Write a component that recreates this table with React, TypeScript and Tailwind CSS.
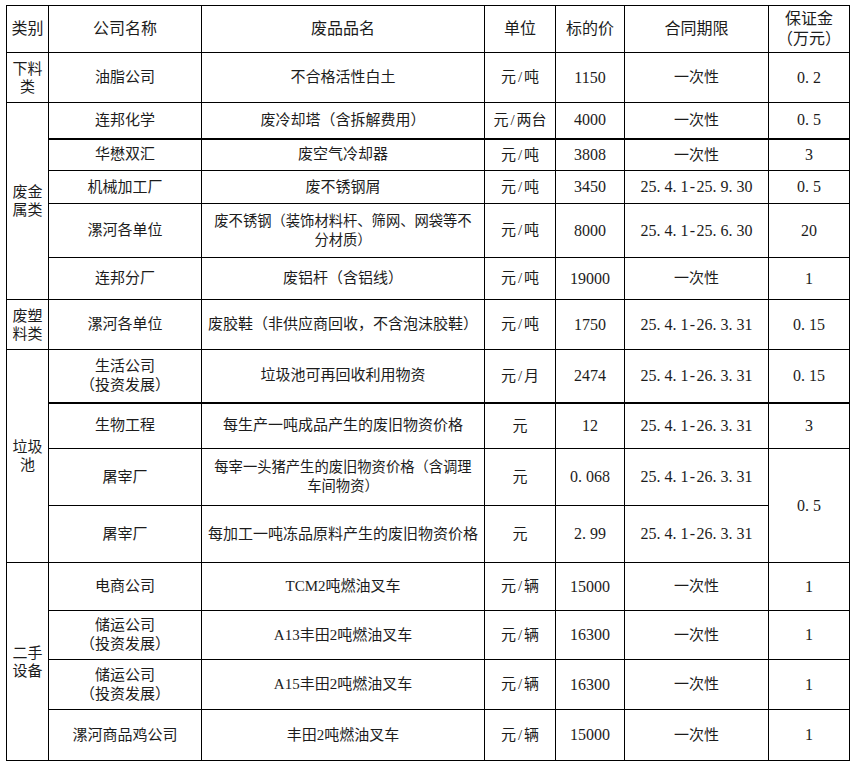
import React from "react";

// numbers / units: SimSun-like half-width cells for . - /
function Mono({ text }: { text: string }) {
  return (
    <>
      {text.split("").map((c, i) =>
        c === "." || c === "-" || c === "/" ? (
          <span
            key={i}
            className={
              "inline-block w-[8px] " + (c === "." ? "text-left" : "text-center")
            }
          >
            {c}
          </span>
        ) : (
          <React.Fragment key={i}>{c}</React.Fragment>
        )
      )}
    </>
  );
}

const cell = "border border-black p-0 text-center align-middle";
const num = "font-['Liberation_Serif'] text-[16px]";

type Row = {
  h: string;
  cat?: { label: React.ReactNode; span: number };
  company: React.ReactNode;
  item: React.ReactNode;
  itemSmall?: boolean;
  unit: string;
  price: string;
  term: string;
  deposit?: { v: string; span: number };
  thick?: boolean;
};

const rows: Row[] = [
  {
    h: "h-[50px]",
    cat: { label: <>下料<br />类</>, span: 1 },
    company: "油脂公司",
    item: "不合格活性白土",
    unit: "元/吨",
    price: "1150",
    term: "一次性",
    deposit: { v: "0.2", span: 1 },
  },
  {
    h: "h-[36px]",
    cat: { label: <>废金<br />属类</>, span: 5 },
    company: "连邦化学",
    item: "废冷却塔（含拆解费用）",
    unit: "元/两台",
    price: "4000",
    term: "一次性",
    deposit: { v: "0.5", span: 1 },
    thick: true,
  },
  {
    h: "h-[32px]",
    company: "华懋双汇",
    item: "废空气冷却器",
    unit: "元/吨",
    price: "3808",
    term: "一次性",
    deposit: { v: "3", span: 1 },
  },
  {
    h: "h-[33px]",
    company: "机械加工厂",
    item: "废不锈钢屑",
    unit: "元/吨",
    price: "3450",
    term: "25.4.1-25.9.30",
    deposit: { v: "0.5", span: 1 },
  },
  {
    h: "h-[54px]",
    company: "漯河各单位",
    item: <>废不锈钢（装饰材料杆、筛网、网袋等不<br />分材质）</>,
    itemSmall: true,
    unit: "元/吨",
    price: "8000",
    term: "25.4.1-25.6.30",
    deposit: { v: "20", span: 1 },
  },
  {
    h: "h-[42px]",
    company: "连邦分厂",
    item: "废铝杆（含铝线）",
    unit: "元/吨",
    price: "19000",
    term: "一次性",
    deposit: { v: "1", span: 1 },
  },
  {
    h: "h-[50px]",
    cat: { label: <>废塑<br />料类</>, span: 1 },
    company: "漯河各单位",
    item: "废胶鞋（非供应商回收，不含泡沫胶鞋）",
    unit: "元/吨",
    price: "1750",
    term: "25.4.1-26.3.31",
    deposit: { v: "0.15", span: 1 },
  },
  {
    h: "h-[53px]",
    cat: { label: <>垃圾<br />池</>, span: 4 },
    company: <>生活公司<br />（投资发展）</>,
    item: "垃圾池可再回收利用物资",
    unit: "元/月",
    price: "2474",
    term: "25.4.1-26.3.31",
    deposit: { v: "0.15", span: 1 },
    thick: true,
  },
  {
    h: "h-[46px]",
    company: "生物工程",
    item: "每生产一吨成品产生的废旧物资价格",
    unit: "元",
    price: "12",
    term: "25.4.1-26.3.31",
    deposit: { v: "3", span: 1 },
  },
  {
    h: "h-[57px]",
    company: "屠宰厂",
    item: <>每宰一头猪产生的废旧物资价格（含调理<br />车间物资）</>,
    itemSmall: true,
    unit: "元",
    price: "0.068",
    term: "25.4.1-26.3.31",
    deposit: { v: "0.5", span: 2 },
  },
  {
    h: "h-[57px]",
    company: "屠宰厂",
    item: "每加工一吨冻品原料产生的废旧物资价格",
    unit: "元",
    price: "2.99",
    term: "25.4.1-26.3.31",
  },
  {
    h: "h-[48px]",
    cat: { label: <>二手<br />设备</>, span: 4 },
    company: "电商公司",
    item: "TCM2吨燃油叉车",
    unit: "元/辆",
    price: "15000",
    term: "一次性",
    deposit: { v: "1", span: 1 },
  },
  {
    h: "h-[49px]",
    company: <>储运公司<br />（投资发展）</>,
    item: "A13丰田2吨燃油叉车",
    unit: "元/辆",
    price: "16300",
    term: "一次性",
    deposit: { v: "1", span: 1 },
  },
  {
    h: "h-[50px]",
    company: <>储运公司<br />（投资发展）</>,
    item: "A15丰田2吨燃油叉车",
    unit: "元/辆",
    price: "16300",
    term: "一次性",
    deposit: { v: "1", span: 1 },
  },
  {
    h: "h-[51px]",
    company: "漯河商品鸡公司",
    item: "丰田2吨燃油叉车",
    unit: "元/辆",
    price: "15000",
    term: "一次性",
    deposit: { v: "1", span: 1 },
  },
];

export default function App() {
  return (
    <div className="min-h-screen bg-white pl-[6px] pt-[5px] font-['Liberation_Serif','Noto_Sans_CJK_SC',serif] text-[15px] text-[#1c1c1c]">
      <table className="table-fixed border-collapse w-[843px]">
        <colgroup>
          <col className="w-[42px]" />
          <col className="w-[153px]" />
          <col className="w-[283px]" />
          <col className="w-[71px]" />
          <col className="w-[69px]" />
          <col className="w-[144px]" />
          <col className="w-[81px]" />
        </colgroup>
        <thead>
          <tr className="h-[47px] text-[16px]">
            <th className={cell + " font-normal"}>类别</th>
            <th className={cell + " font-normal"}>公司名称</th>
            <th className={cell + " font-normal"}>废品品名</th>
            <th className={cell + " font-normal"}>单位</th>
            <th className={cell + " font-normal"}>标的价</th>
            <th className={cell + " font-normal"}>合同期限</th>
            <th className={cell + " font-normal leading-[20px]"}>
              保证金
              <br />
              （万元）
            </th>
          </tr>
        </thead>
        <tbody>
          {rows.map((r, i) => {
            const b = r.thick ? " border-b-2" : "";
            return (
              <tr key={i} className={r.h}>
                {r.cat && (
                  <td rowSpan={r.cat.span} className={cell + " leading-[18px]"}>
                    {r.cat.label}
                  </td>
                )}
                <td className={cell + b + " leading-[19px]"}>{r.company}</td>
                <td
                  className={
                    cell +
                    b +
                    " whitespace-nowrap leading-[19px]" +
                    (r.itemSmall ? " text-[14.3px]" : "")
                  }
                >
                  {r.item}
                </td>
                <td className={cell + b}>
                  <Mono text={r.unit} />
                </td>
                <td className={cell + b + " " + num}>
                  <Mono text={r.price} />
                </td>
                <td className={cell + b + (r.term === "一次性" ? "" : " " + num)}>
                  <Mono text={r.term} />
                </td>
                {r.deposit && (
                  <td rowSpan={r.deposit.span} className={cell + b + " " + num}>
                    <Mono text={r.deposit.v} />
                  </td>
                )}
              </tr>
            );
          })}
        </tbody>
      </table>
    </div>
  );
}
